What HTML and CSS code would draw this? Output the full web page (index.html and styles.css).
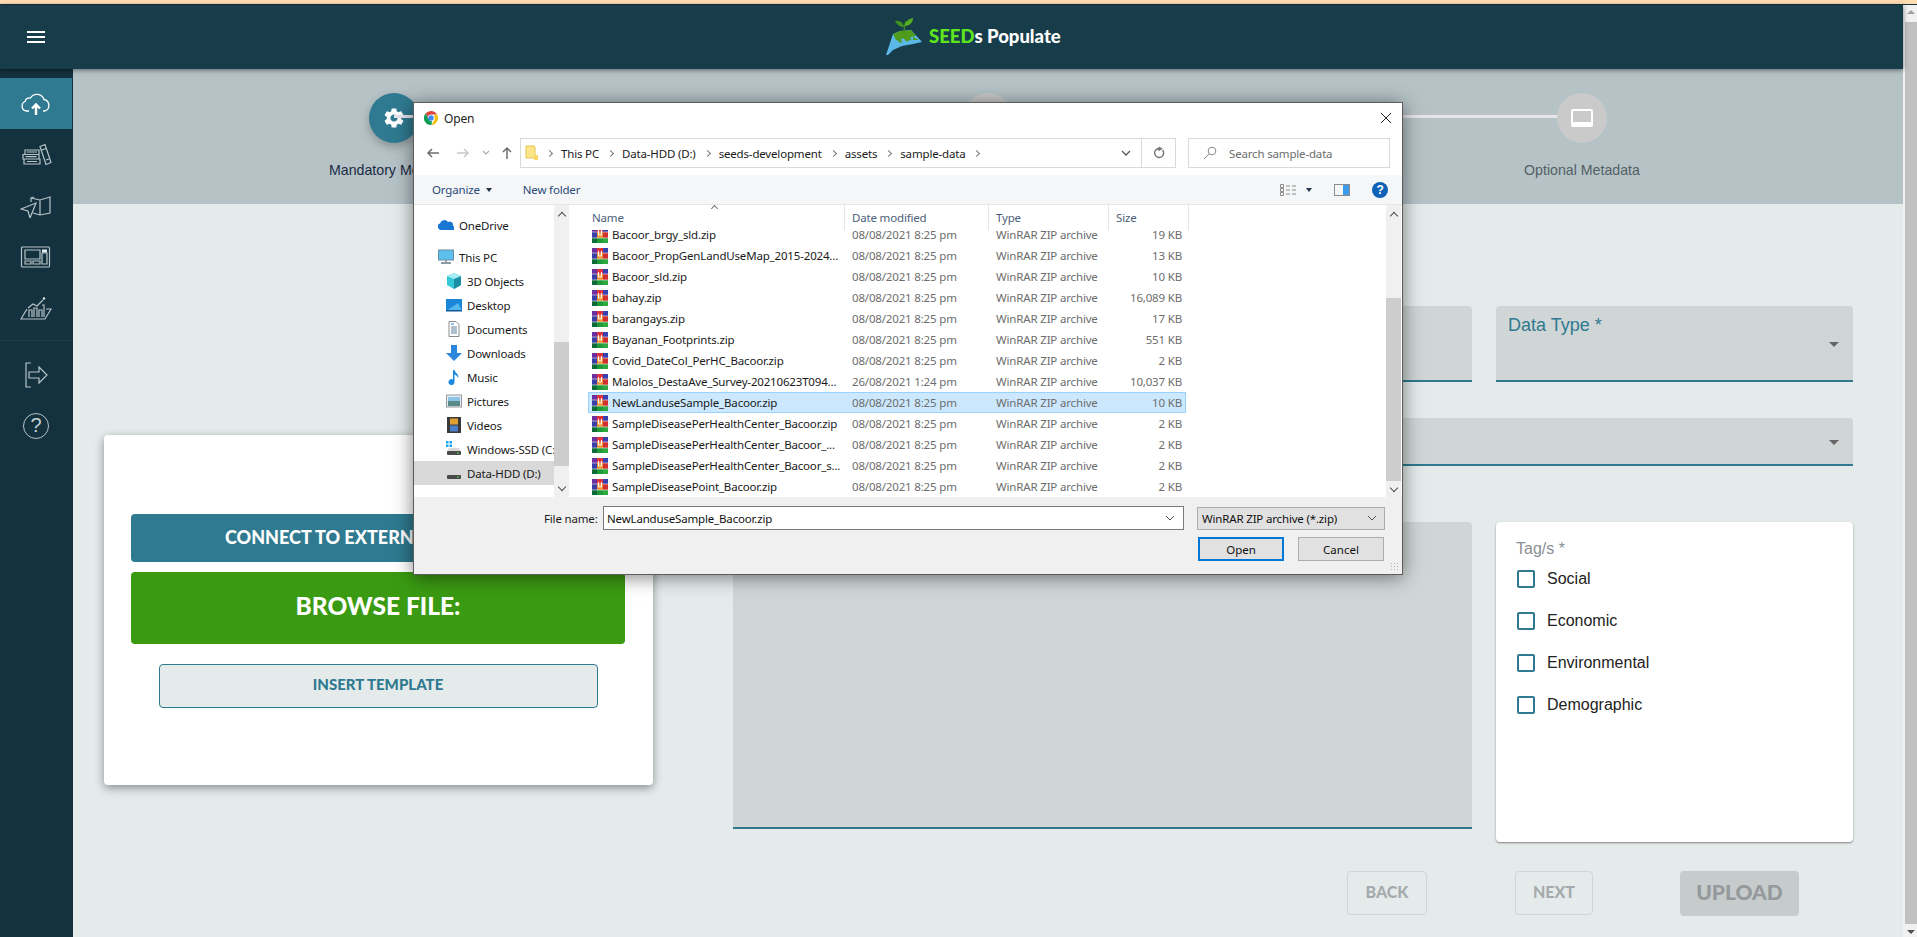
FILE: index.html
```html
<!DOCTYPE html>
<html lang="en">
<head>
  <meta charset="UTF-8">
  <meta name="viewport" content="width=device-width, initial-scale=1.0">
  <title>SEEDs Populate</title>
  <link rel="stylesheet" href="styles.css">
</head>
<body>

  <svg class="sprites" width="0" height="0">
    <symbol id="rar" viewBox="0 0 16 16">
      <rect x="0" y="0" width="5" height="5" fill="#6a2fa0"/>
      <rect x="5" y="0" width="6" height="5" fill="#e0343a"/>
      <rect x="11" y="0" width="5" height="5" fill="#3a3fb0"/>
      <rect x="0" y="5" width="5" height="6" fill="#3a3fa8"/>
      <rect x="5" y="5" width="6" height="6" fill="#f08a2a"/>
      <rect x="11" y="5" width="5" height="6" fill="#d03030"/>
      <rect x="0" y="11" width="5" height="5" fill="#0f6a3a"/>
      <rect x="5" y="11" width="6" height="5" fill="#1e9a3a"/>
      <rect x="11" y="11" width="5" height="5" fill="#2fa83f"/>
      <path d="M6.500 3v5h3V3" fill="none" stroke="#fff" stroke-width="1"/>
      <rect x="0" y="4.700" width="16" height=".6" fill="#f3e3e3"/>
      <rect x="0" y="10.700" width="16" height=".6" fill="#f3f3e3"/>
    </symbol>
    <symbol id="drive" viewBox="0 0 16 16">
      <path d="M3 7h10l2 3H1z" fill="#d8d8d8"/>
      <rect x="1" y="10" width="14" height="4" rx="1" fill="#4a4a4a"/>
      <rect x="11" y="11.500" width="2" height="1.200" fill="#45d64a"/>
    </symbol>
  </svg>

  <div class="top-strip"></div>

  <div class="window">
    <div class="app">
      <header class="app-bar">
        <div class="menu-btn"><span></span><span></span><span></span></div>
        <div class="brand">
          <svg class="brand-mark" width="38" height="38" viewBox="0 0 38 38">
            <path d="M1 37 8 16l7-3 11-1 11 12-9 2-11 2-9 4-5 5z" fill="#5cb8e6"/>
            <path d="M8 16l7-3 11-1 5 6-5 1-4 5-4-4-4 3-3-1z" fill="#4f9c1c"/>
            <path d="M19 15c0-4 0-7 2-12" fill="none" stroke="#3f8a1a" stroke-width="1.500"/>
            <path d="M19 9C16 9 12 7 10 3c4-1 8 1 9 6z" fill="#3d9420"/>
            <path d="M20 8c0-4 3-7 8-8 0 4-3 8-8 8z" fill="#55ad24"/>
            <path d="M13 24l3-3 1 4zM23 20l4 1-3 2zM28 19l6 3-6 0z" fill="#4f9c1c"/>
          </svg>
          <span class="brand-name"><span class="brand-seeds">SEED</span>s Populate</span>
        </div>
      </header>

      <div class="app-body">
        <nav class="side-nav">
          <div class="side-item active">
            <svg width="32" height="24" viewBox="0 0 32 24" fill="none" stroke="#fff" stroke-width="1.300">
              <path d="M9 19H6.500A5 5 0 0 1 5 9.500 5 5 0 0 1 10.500 6 7.500 7.500 0 0 1 24 7.500 6 6 0 0 1 25 19h-2"/>
              <path d="M16 23V13M12 16.500l4-4 4 4" stroke-width="2.400"/>
            </svg>
          </div>
          <div class="side-item">
            <svg width="32" height="24" viewBox="0 0 32 24" fill="none" stroke="#b7c4c8" stroke-width="1.200">
              <path d="M5 7h14v4.500H5zM3 11.500h16V16H3zM4 16h16v5H4zM7 9h10M5.500 13.700h11M7 18.500h10"/>
              <path d="M20 3.500l5-2 6 18-5 2zM21.500 7l5-1.500M26 17l3-1"/>
            </svg>
          </div>
          <div class="side-item">
            <svg width="32" height="24" viewBox="0 0 32 24" fill="none" stroke="#b7c4c8" stroke-width="1.200">
              <path d="M11 8V4l9 2 10-3v16l-10 2-7-2M20 6v15M11 4l3-1"/>
              <path d="M1 15l15-6-6 15-2-7z"/>
            </svg>
          </div>
          <div class="side-item">
            <svg width="32" height="24" viewBox="0 0 32 24" fill="none" stroke="#b7c4c8" stroke-width="1.200">
              <rect x="1.500" y="2" width="28" height="20" rx="1"/>
              <path d="M5 5h15v9H5zM5 16h6v3H5zM13 16h7v3h-7zM22 8h5v11h-5z"/>
              <rect x="22" y="4.500" width="5" height="3" fill="#e8eeee" stroke="none"/>
            </svg>
          </div>
          <div class="side-item">
            <svg width="32" height="24" viewBox="0 0 32 24" fill="none" stroke="#b7c4c8" stroke-width="1.200">
              <path d="M7 13L1 23h24l6-10h-5"/>
              <path d="M9 21v-7h3v7M14 21v-9h3v9M19 21v-7h3v7M24 21V9h-2"/>
              <path d="M8 12l5-4 4 2 6-6"/>
              <circle cx="24" cy="2.500" r="1.200" fill="#e8eeee" stroke="none"/>
            </svg>
          </div>
          <div class="side-divider"></div>
          <div class="side-item">
            <svg width="26" height="26" viewBox="0 0 26 26" fill="none" stroke="#b7c4c8" stroke-width="1.200">
              <path d="M8 1H3v24h5"/>
              <path d="M6 10h10V5l8 8-8 8v-5H6z"/>
            </svg>
          </div>
          <div class="side-item">
            <div class="help-ring">?</div>
          </div>
        </nav>

        <main class="main">
          <section class="stepper">
            <div class="step">
              <div class="step-dot current">
                <svg width="24" height="24" viewBox="0 0 24 24" fill="#fff"><path d="M19.14 12.94c.04-.3.06-.61.06-.94 0-.32-.02-.64-.07-.94l2.03-1.58a.49.49 0 0 0 .12-.61l-1.92-3.32a.488.488 0 0 0-.59-.22l-2.39.96c-.5-.38-1.03-.7-1.62-.94l-.36-2.54a.484.484 0 0 0-.48-.41h-3.84c-.24 0-.43.17-.47.41l-.36 2.54c-.59.24-1.13.57-1.62.94l-2.39-.96c-.22-.08-.47 0-.59.22L2.74 8.87c-.12.21-.08.47.12.61l2.03 1.58c-.05.3-.09.63-.09.94s.02.64.07.94l-2.03 1.58a.49.49 0 0 0-.12.61l1.92 3.32c.12.22.37.29.59.22l2.39-.96c.5.38 1.03.7 1.62.94l.36 2.54c.05.24.24.41.48.41h3.84c.24 0 .44-.17.47-.41l.36-2.54c.59-.24 1.13-.56 1.62-.94l2.39.96c.22.08.47 0 .59-.22l1.92-3.32c.12-.22.07-.47-.12-.61l-2.01-1.58zM12 15.6c-1.98 0-3.6-1.62-3.6-3.6s1.62-3.6 3.6-3.6 3.6 1.62 3.6 3.6-1.62 3.6-3.6 3.6z"/></svg>
              </div>
              <p class="step-label current">Mandatory Metadata</p>
            </div>
            <div class="step">
              <div class="step-line"></div>
              <div class="step-dot"></div>
            </div>
            <div class="step">
              <div class="step-line"></div>
              <div class="step-dot"><div class="screen-icon"></div></div>
              <p class="step-label">Optional Metadata</p>
            </div>
          </section>

          <section class="work">
            <div class="source-card">
              <button class="btn-connect">CONNECT TO EXTERNAL DATABASE</button>
              <button class="btn-browse">BROWSE FILE:</button>
              <button class="btn-template">INSERT TEMPLATE</button>
            </div>

            <div class="form">
              <div class="form-row">
                <div class="field tall"></div>
                <div class="field tall">
                  <span class="field-label">Data Type *</span>
                  <span class="caret"></span>
                </div>
              </div>
              <div class="field short">
                <span></span>
                <span class="caret"></span>
              </div>
              <div class="form-row lower">
                <div class="field desc"></div>
                <div class="tags-card">
                  <p class="tags-title">Tag/s *</p>
                  <label class="tag"><span class="check"></span>Social</label>
                  <label class="tag"><span class="check"></span>Economic</label>
                  <label class="tag"><span class="check"></span>Environmental</label>
                  <label class="tag"><span class="check"></span>Demographic</label>
                </div>
              </div>
              <div class="actions">
                <button class="btn-ghost back">BACK</button>
                <button class="btn-ghost next">NEXT</button>
                <button class="btn-upload">UPLOAD</button>
              </div>
            </div>
          </section>
        </main>
      </div>
    </div>

    <div class="page-scroll">
      <div class="scroll-up"></div>
      <div class="scroll-thumb"></div>
      <div class="scroll-down"></div>
    </div>
  </div>

  <!-- native file picker sits over the page -->
  <div class="dialog">
    <div class="dlg-title">
      <svg width="14" height="14" viewBox="0 0 14 14">
        <path d="M7 0a7 7 0 0 1 6.100 3.500H7a3.500 3.500 0 0 0-3.300 2.400L1.500 2.600A7 7 0 0 1 7 0z" fill="#db4437"/>
        <path d="M13.100 3.500A7 7 0 0 1 7.500 14l2.800-5A3.500 3.500 0 0 0 9.500 4.500z" fill="#f4c20d"/>
        <path d="M7.500 14A7 7 0 0 1 1.500 2.600l2.900 5A3.500 3.500 0 0 0 8 10.300z" fill="#0f9d58"/>
        <circle cx="7" cy="7" r="2.700" fill="#4285f4"/>
      </svg>
      <span>Open</span>
      <svg class="dlg-close" width="12" height="12" viewBox="0 0 12 12" stroke="#222" stroke-width="1"><path d="M1 1l10 10M11 1L1 11"/></svg>
    </div>

    <div class="dlg-address">
      <svg width="14" height="14" viewBox="0 0 14 14" fill="none" stroke="#6d6d6d" stroke-width="1.500"><path d="M13 7H2M6 3L2 7l4 4"/></svg>
      <svg class="faint" width="14" height="14" viewBox="0 0 14 14" fill="none" stroke="#c8c8c8" stroke-width="1.500"><path d="M1 7h11M8 3l4 4-4 4"/></svg>
      <svg class="tiny" width="8" height="6" viewBox="0 0 8 6" fill="none" stroke="#aaa" stroke-width="1.200"><path d="M1 1l3 3 3-3"/></svg>
      <svg class="up" width="14" height="14" viewBox="0 0 14 14" fill="none" stroke="#6d6d6d" stroke-width="1.500"><path d="M7 13V2M3 6l4-4 4 4"/></svg>
      <div class="path-box">
        <svg class="folder" width="14" height="16" viewBox="0 0 14 16"><path d="M1 1h8l1 1v11H1z" fill="#fde58a" stroke="#e8c64f"/><rect x="9" y="10" width="4" height="5" fill="#fbd765"/></svg>
        <i class="chev"></i><span>This PC</span>
        <i class="chev"></i><span>Data-HDD (D:)</span>
        <i class="chev"></i><span>seeds-development</span>
        <i class="chev"></i><span>assets</span>
        <i class="chev"></i><span>sample-data</span>
        <i class="chev"></i>
        <div class="path-end">
          <svg width="10" height="6" viewBox="0 0 10 6" fill="none" stroke="#555" stroke-width="1.300"><path d="M1 1l4 4 4-4"/></svg>
          <div class="refresh">
            <svg width="12" height="12" viewBox="0 0 12 12" fill="none" stroke="#6d6d6d" stroke-width="1.300"><path d="M9.500 3A4.500 4.500 0 1 1 6 1.500M6 .2v3l2.500-1.500z"/></svg>
          </div>
        </div>
      </div>
      <div class="search-box">
        <svg width="14" height="14" viewBox="0 0 14 14" fill="none" stroke="#8a8a8a"><circle cx="9" cy="5" r="3.800"/><path d="M6 8l-5 5"/></svg>
        <span>Search sample-data</span>
      </div>
    </div>

    <div class="dlg-toolbar">
      <span class="tool">Organize</span><i class="drop"></i>
      <span class="tool new-folder">New folder</span>
      <div class="tool-right">
        <svg width="16" height="12" viewBox="0 0 16 12" fill="none" stroke="#8c8c8c"><path d="M.5.500h3v3h-3zM.5 4.500h3v3h-3zM.5 8.500h3v3h-3zM6 2h4M12 2h4M6 6h4M12 6h4M6 10h4M12 10h4"/></svg>
        <i class="drop"></i>
        <div class="preview-icon"><span></span></div>
        <div class="help-dot">?</div>
      </div>
    </div>

    <div class="dlg-panes">
      <div class="nav-pane">
        <div class="nav-list">
          <div class="nav-item top">
            <svg width="16" height="16" viewBox="0 0 16 16"><path d="M1 12a3 3 0 0 1 1-5.500A4.500 4.500 0 0 1 10 5a3.500 3.500 0 0 1 5 4 2 2 0 0 1 0 4H2z" fill="#1976d2"/></svg>
            OneDrive
          </div>
          <div class="nav-item top gap">
            <svg width="16" height="16" viewBox="0 0 16 16"><rect x="0.500" y="1" width="15" height="10" fill="#5cc1ee" stroke="#6a8ca0"/><path d="M3 14h10" stroke="#8b9aa3" stroke-width="2"/><path d="M7 11h2v2H7z" fill="#9aa7ae"/></svg>
            This PC
          </div>
          <div class="nav-item">
            <svg width="16" height="16" viewBox="0 0 16 16"><path d="M8 0l7 3v9l-7 4-7-4V3z" fill="#36c8d8"/><path d="M8 6v10l7-4V3z" fill="#1a8fa6"/><path d="M8 6L1 3l7-3 7 3z" fill="#a9ecf2"/></svg>
            3D Objects
          </div>
          <div class="nav-item">
            <svg width="16" height="16" viewBox="0 0 16 16"><rect x="0" y="2" width="16" height="12" fill="#1a86d8"/><path d="M0 14L12 6l4 8z" fill="#55b8ee"/><rect x="0" y="13" width="16" height="1.500" fill="#0e5a96"/></svg>
            Desktop
          </div>
          <div class="nav-item">
            <svg width="16" height="16" viewBox="0 0 16 16" fill="none"><path d="M3 .500h7l3 3v12H3z" fill="#fff" stroke="#8b8b8b"/><path d="M5 6h6M5 8h6M5 10h6M5 12h6" stroke="#5f7f9d"/><path d="M5 3h3" stroke="#2b85d8"/></svg>
            Documents
          </div>
          <div class="nav-item">
            <svg width="16" height="16" viewBox="0 0 16 16"><path d="M5 0h6v8h5l-8 8-8-8h5z" fill="#2b87dc"/></svg>
            Downloads
          </div>
          <div class="nav-item">
            <svg width="16" height="16" viewBox="0 0 16 16"><path d="M7 1h1.500c.500 3 5 4 3.500 8-.500-2-2-3-3.500-3.500V13a3 3 0 1 1-1.500-2.500z" fill="#1c8ae0"/></svg>
            Music
          </div>
          <div class="nav-item">
            <svg width="16" height="16" viewBox="0 0 16 16"><rect x=".500" y="2" width="15" height="12" fill="#dfeef7" stroke="#999"/><path d="M2 8h12v5H2z" fill="#5a8a86"/><path d="M2 4h12v4H2z" fill="#8ec3e4"/></svg>
            Pictures
          </div>
          <div class="nav-item">
            <svg width="16" height="16" viewBox="0 0 16 16"><rect x="1" y="0" width="14" height="16" fill="#3a3a3a"/><rect x="4" y="1.500" width="8" height="6" fill="#e0a030"/><rect x="4" y="8.500" width="8" height="6" fill="#4a7ec8"/></svg>
            Videos
          </div>
          <div class="nav-item">
            <svg width="16" height="16" viewBox="0 0 16 16"><use href="#drive"/><path d="M0 0h2.500v2.500H0zM3.500 0H6v2.500H3.500zM0 3.500h2.500V6H0zM3.500 3.500H6V6H3.500z" fill="#18a7ef"/></svg>
            Windows-SSD (C:)
          </div>
          <div class="nav-item picked">
            <svg width="16" height="16" viewBox="0 0 16 16"><use href="#drive"/></svg>
            Data-HDD (D:)
          </div>
        </div>
        <div class="nav-scroll">
          <i class="arrow-up"></i>
          <div class="nav-thumb"></div>
          <i class="arrow-down"></i>
        </div>
      </div>

      <div class="file-pane">
        <div class="file-head">
          <span class="col-name">Name<i class="sort-mark"></i></span>
          <span class="col-date">Date modified</span>
          <span class="col-type">Type</span>
          <span class="col-size">Size</span>
        </div>
        <div class="file-rows">
          <div class="file-row"><span class="col-name"><svg width="16" height="16"><use href="#rar"/></svg>Bacoor_brgy_sld.zip</span><span class="col-date">08/08/2021 8:25 pm</span><span class="col-type">WinRAR ZIP archive</span><span class="col-size">19 KB</span></div>
          <div class="file-row"><span class="col-name"><svg width="16" height="16"><use href="#rar"/></svg>Bacoor_PropGenLandUseMap_2015-2024...</span><span class="col-date">08/08/2021 8:25 pm</span><span class="col-type">WinRAR ZIP archive</span><span class="col-size">13 KB</span></div>
          <div class="file-row"><span class="col-name"><svg width="16" height="16"><use href="#rar"/></svg>Bacoor_sld.zip</span><span class="col-date">08/08/2021 8:25 pm</span><span class="col-type">WinRAR ZIP archive</span><span class="col-size">10 KB</span></div>
          <div class="file-row"><span class="col-name"><svg width="16" height="16"><use href="#rar"/></svg>bahay.zip</span><span class="col-date">08/08/2021 8:25 pm</span><span class="col-type">WinRAR ZIP archive</span><span class="col-size">16,089 KB</span></div>
          <div class="file-row"><span class="col-name"><svg width="16" height="16"><use href="#rar"/></svg>barangays.zip</span><span class="col-date">08/08/2021 8:25 pm</span><span class="col-type">WinRAR ZIP archive</span><span class="col-size">17 KB</span></div>
          <div class="file-row"><span class="col-name"><svg width="16" height="16"><use href="#rar"/></svg>Bayanan_Footprints.zip</span><span class="col-date">08/08/2021 8:25 pm</span><span class="col-type">WinRAR ZIP archive</span><span class="col-size">551 KB</span></div>
          <div class="file-row"><span class="col-name"><svg width="16" height="16"><use href="#rar"/></svg>Covid_DateCol_PerHC_Bacoor.zip</span><span class="col-date">08/08/2021 8:25 pm</span><span class="col-type">WinRAR ZIP archive</span><span class="col-size">2 KB</span></div>
          <div class="file-row"><span class="col-name"><svg width="16" height="16"><use href="#rar"/></svg>Malolos_DestaAve_Survey-20210623T094...</span><span class="col-date">26/08/2021 1:24 pm</span><span class="col-type">WinRAR ZIP archive</span><span class="col-size">10,037 KB</span></div>
          <div class="file-row selected"><span class="col-name"><svg width="16" height="16"><use href="#rar"/></svg>NewLanduseSample_Bacoor.zip</span><span class="col-date">08/08/2021 8:25 pm</span><span class="col-type">WinRAR ZIP archive</span><span class="col-size">10 KB</span></div>
          <div class="file-row"><span class="col-name"><svg width="16" height="16"><use href="#rar"/></svg>SampleDiseasePerHealthCenter_Bacoor.zip</span><span class="col-date">08/08/2021 8:25 pm</span><span class="col-type">WinRAR ZIP archive</span><span class="col-size">2 KB</span></div>
          <div class="file-row"><span class="col-name"><svg width="16" height="16"><use href="#rar"/></svg>SampleDiseasePerHealthCenter_Bacoor_...</span><span class="col-date">08/08/2021 8:25 pm</span><span class="col-type">WinRAR ZIP archive</span><span class="col-size">2 KB</span></div>
          <div class="file-row"><span class="col-name"><svg width="16" height="16"><use href="#rar"/></svg>SampleDiseasePerHealthCenter_Bacoor_s...</span><span class="col-date">08/08/2021 8:25 pm</span><span class="col-type">WinRAR ZIP archive</span><span class="col-size">2 KB</span></div>
          <div class="file-row"><span class="col-name"><svg width="16" height="16"><use href="#rar"/></svg>SampleDiseasePoint_Bacoor.zip</span><span class="col-date">08/08/2021 8:25 pm</span><span class="col-type">WinRAR ZIP archive</span><span class="col-size">2 KB</span></div>
        </div>
      </div>

      <div class="list-scroll">
        <i class="arrow-up"></i>
        <div class="list-thumb"></div>
        <i class="arrow-down"></i>
      </div>
    </div>

    <div class="dlg-bottom">
      <div class="name-row">
        <label class="name-label">File name:</label>
        <div class="name-input">
          <span>NewLanduseSample_Bacoor.zip</span>
          <svg width="10" height="6" viewBox="0 0 10 6" fill="none" stroke="#555"><path d="M1 1l4 4 4-4"/></svg>
        </div>
        <div class="type-select">
          <span>WinRAR ZIP archive (*.zip)</span>
          <svg width="10" height="6" viewBox="0 0 10 6" fill="none" stroke="#555"><path d="M1 1l4 4 4-4"/></svg>
        </div>
      </div>
      <div class="dlg-buttons">
        <button class="dlg-btn default">Open</button>
        <button class="dlg-btn">Cancel</button>
      </div>
      <div class="grip"></div>
    </div>
  </div>

</body>
</html>
```

FILE: styles.css
```css
* {
  box-sizing: border-box;
}
body {
  margin: 0;
  height: 937px;
  overflow: hidden;
  display: flex;
  flex-direction: column;
  background-color: #e5ebeb;
  color: #222;
  font-family: "Liberation Sans", Arial, sans-serif;
}
.sprites {
  position: absolute;
}
button {
  font-family: inherit;
  cursor: pointer;
}
.top-strip {
  height: 4px;
  flex: none;
  background-color: #ffdcb2;
}
.window {
  flex: 1;
  display: flex;
  min-height: 0;
  border-top: 1px solid #17323d;
}
.app {
  flex: 1;
  display: flex;
  flex-direction: column;
  min-width: 0;
}

/* header */
.app-bar {
  height: 64px;
  flex: none;
  display: flex;
  align-items: center;
  position: relative;
  z-index: 2;
  background-color: #183d4a;
  box-shadow: 0 1px 5px rgba(0, 0, 0, 0.5);
}
.menu-btn {
  width: 18px;
  margin-left: 27px;
  display: flex;
  flex-direction: column;
  gap: 3px;
}
.menu-btn span {
  height: 2px;
  background-color: #fff;
}
.brand {
  margin-left: 840px;
  display: flex;
  align-items: center;
  gap: 6px;
}
.brand-name {
  margin-bottom: 3px;
  color: #fff;
  font-family: Lato, sans-serif;
  font-weight: 900;
  font-size: 18.500px;
}
.brand-seeds {
  color: #5fe51d;
}

/* sidebar */
.app-body {
  flex: 1;
  display: flex;
  min-height: 0;
}
.side-nav {
  width: 73px;
  flex: none;
  padding-top: 9px;
  background-color: #13313e;
}
.side-item {
  width: 72px;
  height: 51px;
  display: flex;
  align-items: center;
  justify-content: center;
}
.side-item.active {
  background-color: #2f7a90;
}
.side-divider {
  height: 1px;
  margin: 7px 0 8px;
  background-color: #1c3e4b;
}
.help-ring {
  width: 26px;
  height: 26px;
  border: 1.500px solid #b7c4c8;
  border-radius: 50%;
  color: #c6d1d4;
  font-size: 20px;
  line-height: 23px;
  text-align: center;
}

/* stepper */
.main {
  flex: 1;
  display: flex;
  flex-direction: column;
  min-width: 0;
}
.stepper {
  height: 135px;
  flex: none;
  display: flex;
  padding: 24px 24px 0;
  background-color: #b5c3c7;
}
.step {
  width: 594px;
  position: relative;
  display: flex;
  flex-direction: column;
  align-items: center;
}
.step-dot {
  width: 50px;
  height: 50px;
  position: relative;
  display: flex;
  align-items: center;
  justify-content: center;
  border-radius: 50%;
  background-color: #cacaca;
}
.step-dot.current {
  background-color: #2f7a90;
  box-shadow: 0 4px 10px rgba(0, 0, 0, 0.25);
}
.step-line {
  position: absolute;
  top: 22px;
  right: 50%;
  width: 594px;
  height: 3px;
  background-color: #e8e4ec;
}
.screen-icon {
  width: 22px;
  height: 18px;
  border: 2px solid #fff;
  border-bottom-width: 5px;
  border-radius: 2px;
}
.step-label {
  margin: 18px 0 0;
  font-size: 14.200px;
  line-height: 18px;
  color: #555f63;
}
.step-label.current {
  color: #222b44;
}

/* work area */
.work {
  flex: 1;
  display: flex;
  gap: 80px;
  padding: 102px 50px 0 31px;
}
.source-card {
  width: 549px;
  height: 350px;
  margin-top: 129px;
  flex: none;
  display: flex;
  flex-direction: column;
  align-items: center;
  padding: 79px 1px 0 0;
  background-color: #fff;
  border-radius: 4px;
  box-shadow: 0 3px 10px rgba(0, 0, 0, 0.4);
}
.source-card button {
  border-radius: 4px;
  font-family: Lato, sans-serif;
  font-weight: 900;
}
.btn-connect {
  width: 494px;
  height: 48px;
  padding: 0 0 3px;
  border: 0;
  background-color: #2f7a90;
  color: #fff;
  font-size: 18px;
}
.btn-browse {
  width: 494px;
  height: 72px;
  margin-top: 10px;
  padding: 0 0 6px;
  border: 0;
  background-color: #3a9a12;
  color: #fff;
  font-size: 24.500px;
}
.btn-template {
  width: 439px;
  height: 44px;
  margin-top: 20px;
  padding: 0 0 4px;
  border: 1px solid #2f7a90;
  background-color: #e5ebeb;
  color: #2f7a90;
  font-size: 15px;
}
.form {
  flex: 1;
  min-width: 0;
  display: flex;
  flex-direction: column;
}
.form-row {
  display: grid;
  grid-template-columns: 739px 357px;
  gap: 24px;
  align-items: start;
}
.form-row.lower {
  margin-top: 56px;
}
.field {
  display: flex;
  justify-content: space-between;
  padding: 0 14px 0 12px;
  background-color: #d0d6d6;
  border-bottom: 2px solid #2f7a90;
  border-radius: 4px 4px 0 0;
}
.field.tall {
  height: 76px;
}
.field.short {
  height: 48px;
  margin-top: 36px;
}
.field.desc {
  height: 307px;
}
.field-label {
  margin-top: 8px;
  font-size: 18px;
  line-height: 22px;
  color: #2f7a90;
}
.caret {
  width: 0;
  height: 0;
  margin-top: 36px;
  border-left: 5px solid transparent;
  border-right: 5px solid transparent;
  border-top: 5px solid #666;
}
.field.short .caret {
  margin-top: 22px;
}
.tags-card {
  height: 320px;
  padding: 17px 20px;
  background-color: #fff;
  border-radius: 4px;
  box-shadow: 0 1px 2px rgba(0, 0, 0, 0.45);
}
.tags-title {
  margin: 0 0 11px;
  font-size: 16px;
  line-height: 20px;
  color: #8a8f91;
}
.tag {
  height: 42px;
  display: flex;
  align-items: flex-start;
  gap: 12px;
  padding-left: 1px;
  font-size: 16px;
  line-height: 18px;
  color: #222;
}
.check {
  width: 18px;
  height: 18px;
  border: 2px solid #2f7a90;
  border-radius: 2px;
}
.actions {
  margin-top: 29px;
  display: flex;
  justify-content: flex-end;
  padding-right: 54px;
}
.btn-ghost {
  height: 44px;
  padding: 0 0 4px;
  border: 1px solid #d0d6d6;
  border-radius: 4px;
  background: none;
  color: #a5abad;
  font-family: Lato, sans-serif;
  font-weight: 900;
  font-size: 16px;
}
.btn-ghost.back {
  width: 80px;
  margin-right: 88px;
}
.btn-ghost.next {
  width: 78px;
  margin-right: 87px;
}
.btn-upload {
  width: 119px;
  height: 45px;
  padding: 0 0 5px;
  border: 0;
  border-radius: 4px;
  background-color: #c6cbcc;
  color: #95999b;
  font-family: Lato, sans-serif;
  font-weight: 900;
  font-size: 21px;
}

/* page scrollbar */
.page-scroll {
  width: 14px;
  flex: none;
  display: flex;
  flex-direction: column;
  align-items: flex-end;
  background-color: #f1f1f1;
}
.scroll-up {
  width: 0;
  height: 0;
  margin: 5px 2px 0 0;
  border-left: 4px solid transparent;
  border-right: 4px solid transparent;
  border-bottom: 4px solid #a0a0a0;
}
.scroll-thumb {
  width: 12px;
  flex: 1;
  margin: 8px 0 6px;
  background-color: #c1c1c1;
}
.scroll-down {
  width: 0;
  height: 0;
  margin: 0 2px 3px 0;
  border-left: 4px solid transparent;
  border-right: 4px solid transparent;
  border-top: 4px solid #505050;
}

/* file dialog */
.dialog {
  position: absolute;
  left: 413px;
  top: 102px;
  width: 990px;
  height: 473px;
  display: flex;
  flex-direction: column;
  background-color: #fff;
  border: 1px solid #5c5c5c;
  box-shadow: 0 2px 18px rgba(0, 0, 0, 0.5);
  font-family: "Noto Sans", "Open Sans", sans-serif;
  font-size: 11.500px;
  letter-spacing: -0.17px;
  color: #1a1a1a;
}
.dialog svg {
  flex: none;
}
.dlg-title {
  height: 30px;
  flex: none;
  display: flex;
  align-items: center;
  gap: 6px;
  padding: 0 10px;
  font-size: 12px;
}
.dlg-title span {
  color: #222;
}
.dlg-close {
  margin-left: auto;
}
.dlg-address {
  height: 42px;
  padding-top: 5px;
  flex: none;
  display: flex;
  align-items: flex-start;
}
.dlg-address > svg {
  margin-top: 8px;
}
.dlg-address > svg:first-child {
  margin-left: 12px;
}
.dlg-address .faint {
  margin-left: 16px;
}
.dlg-address .tiny {
  margin: 12px 0 0 12px;
}
.dlg-address .up {
  margin-left: 10px;
}
.path-box {
  width: 656px;
  height: 30px;
  margin-left: 6px;
  display: flex;
  align-items: center;
  gap: 9px;
  padding-left: 4px;
  border: 1px solid #d9d9d9;
}
.folder {
  margin-right: -1px;
}
.chev {
  width: 5px;
  height: 5px;
  border-top: 1px solid #777;
  border-right: 1px solid #777;
  transform: rotate(45deg);
}
.path-end {
  height: 100%;
  margin-left: auto;
  display: flex;
  align-items: center;
  gap: 10px;
}
.refresh {
  width: 34px;
  height: 100%;
  display: flex;
  align-items: center;
  justify-content: center;
  border-left: 1px solid #d9d9d9;
}
.search-box {
  width: 202px;
  height: 30px;
  margin-left: 12px;
  display: flex;
  align-items: center;
  gap: 12px;
  padding-left: 14px;
  border: 1px solid #d9d9d9;
  color: #6d6d6d;
}
.dlg-toolbar {
  height: 30px;
  flex: none;
  display: flex;
  align-items: center;
  padding-left: 18px;
  background-color: #f5f6f7;
  border-bottom: 1px solid #e6e6e6;
  color: #2b4a7a;
}
.drop {
  width: 0;
  height: 0;
  margin-left: 6px;
  border-left: 3.500px solid transparent;
  border-right: 3.500px solid transparent;
  border-top: 4px solid #22344d;
}
.new-folder {
  margin-left: 31px;
}
.tool-right {
  margin-left: auto;
  display: flex;
  align-items: center;
  padding-right: 14px;
}
.tool-right .drop {
  margin-left: 10px;
}
.preview-icon {
  width: 16px;
  height: 12px;
  margin-left: 22px;
  display: flex;
  justify-content: flex-end;
  border: 1px solid #8c8c8c;
}
.preview-icon span {
  width: 6px;
  background-color: #3c9be8;
}
.help-dot {
  width: 16px;
  height: 16px;
  margin-left: 22px;
  border-radius: 50%;
  background-color: #0f62b5;
  color: #fff;
  font-family: "Liberation Sans", sans-serif;
  font-weight: 700;
  font-size: 12px;
  line-height: 16px;
  text-align: center;
}
.dlg-panes {
  height: 292px;
  flex: none;
  display: flex;
  overflow: hidden;
}
.nav-pane {
  width: 155px;
  flex: none;
  display: flex;
}
.nav-list {
  width: 140px;
  flex: none;
  padding-top: 8px;
  overflow: hidden;
}
.nav-item {
  height: 24px;
  display: flex;
  align-items: center;
  gap: 5px;
  padding-left: 32px;
  white-space: nowrap;
  overflow: hidden;
}
.nav-item.top {
  padding-left: 24px;
}
.nav-item.gap {
  margin-top: 8px;
}
.nav-item.picked {
  background-color: #d9d9d9;
}
.nav-scroll {
  width: 15px;
  flex: none;
  display: flex;
  flex-direction: column;
  align-items: center;
  background-color: #f0f0f0;
}
.arrow-up,
.arrow-down {
  width: 6px;
  height: 6px;
  flex: none;
  border-top: 1.500px solid #505050;
  border-left: 1.500px solid #505050;
  transform: rotate(45deg);
}
.arrow-down {
  transform: rotate(225deg);
}
.nav-scroll .arrow-up,
.list-scroll .arrow-up {
  margin-top: 8px;
}
.nav-thumb {
  width: 15px;
  height: 124px;
  margin: 123px 0 18px;
  background-color: #cdcdcd;
}
.file-pane {
  width: 815px;
  margin-left: 2px;
  flex: none;
  display: flex;
  flex-direction: column;
  overflow: hidden;
}
.file-head {
  height: 25px;
  flex: none;
  display: grid;
  grid-template-columns: 274px 144px 120px 80px;
  position: relative;
  z-index: 1;
  background-color: #fff;
  color: #4c607a;
}
.file-head span {
  display: flex;
  align-items: center;
  padding-left: 7px;
  border-right: 1px solid #e5e5e5;
}
.file-head .col-name {
  padding-left: 21px;
  position: relative;
}
.sort-mark {
  position: absolute;
  left: 141px;
  top: 1px;
  width: 5px;
  height: 5px;
  border-top: 1px solid #777;
  border-left: 1px solid #777;
  transform: rotate(45deg);
}
.file-rows {
  margin-top: -6px;
}
.file-row {
  width: 615px;
  height: 21px;
  display: grid;
  grid-template-columns: 274px 144px 120px 77px;
  align-items: center;
  white-space: nowrap;
  color: #6d6d6d;
}
.file-row .col-name {
  display: flex;
  align-items: center;
  gap: 4px;
  padding-left: 21px;
  color: #1a1a1a;
  overflow: hidden;
}
.file-row .col-date,
.file-row .col-type {
  padding-left: 7px;
}
.file-row .col-size {
  text-align: right;
  padding-right: 4px;
}
.file-row.selected {
  margin-left: 17px;
  width: 598px;
  grid-template-columns: 257px 144px 120px 77px;
  background-color: #cce8ff;
  outline: 1px solid #99d1ff;
  outline-offset: -1px;
}
.file-row.selected .col-name {
  padding-left: 4px;
}
.list-scroll {
  width: 15px;
  margin: 0 1px 0 auto;
  flex: none;
  display: flex;
  flex-direction: column;
  align-items: center;
  background-color: #f0f0f0;
}
.list-thumb {
  width: 15px;
  height: 183px;
  margin: 79px 0 4px;
  background-color: #cdcdcd;
}
.dlg-bottom {
  flex: 1;
  position: relative;
  display: flex;
  flex-direction: column;
  background-color: #f0f0f0;
}
.name-row {
  display: flex;
  align-items: center;
  margin-top: 9px;
  padding-left: 130px;
}
.name-label {
  width: 59px;
  color: #1a1a1a;
}
.name-input {
  width: 581px;
  height: 24px;
  display: flex;
  align-items: center;
  justify-content: space-between;
  padding: 0 8px 0 3px;
  background-color: #fff;
  border: 1px solid #7a7a7a;
  color: #111;
}
.type-select {
  width: 188px;
  height: 23px;
  margin-left: 13px;
  display: flex;
  align-items: center;
  justify-content: space-between;
  padding: 0 7px 0 4px;
  background-color: #e1e1e1;
  border: 1px solid #adadad;
  color: #111;
}
.dlg-buttons {
  display: flex;
  justify-content: flex-end;
  gap: 14px;
  margin-top: 7px;
  padding-right: 18px;
}
.dlg-btn {
  width: 86px;
  height: 24px;
  padding: 0;
  background-color: #e1e1e1;
  border: 1px solid #adadad;
  color: #111;
  font-family: "Noto Sans", "Open Sans", sans-serif;
  font-size: 11.500px;
}
.dlg-btn.default {
  border: 2px solid #0078d7;
}
.grip {
  position: absolute;
  right: 3px;
  bottom: 3px;
  width: 9px;
  height: 9px;
  background-image: radial-gradient(#b4b4b4 1px, transparent 1px);
  background-size: 3px 3px;
}
```
